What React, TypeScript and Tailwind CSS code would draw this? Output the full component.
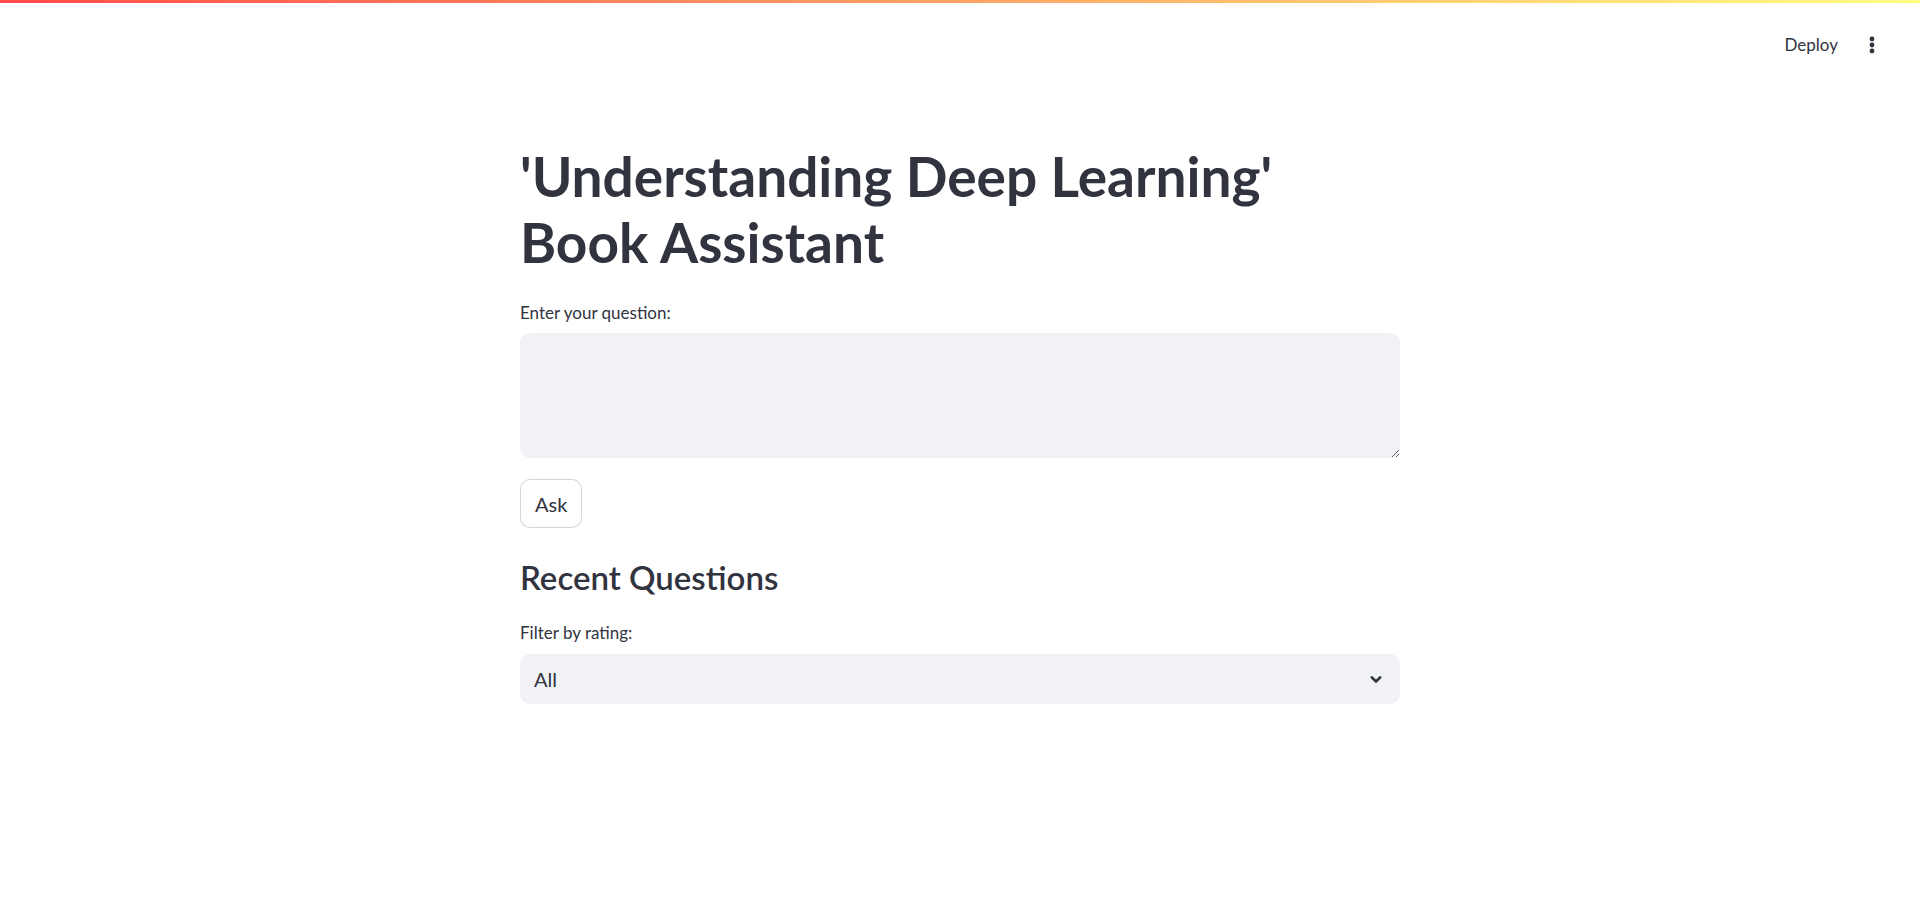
import React from "react";

export default function App() {
  const font = { fontFamily: "Lato, 'Noto Sans', sans-serif" };
  return (
    <div className="min-h-[922px] w-full bg-white text-[#31333f]" style={font}>
      <div className="h-[3px] w-full bg-[linear-gradient(90deg,#ff4b4b,#fffd80)]" />
      <div className="flex h-[84px] items-start justify-end pr-[38px] pt-[29px]">
        <div className="flex items-center gap-[24px]">
          <span className="text-[17px] leading-[26px] text-[#31333f]">Deploy</span>
          <svg width="20" height="20" viewBox="0 0 20 20" fill="#31333f">
            <circle cx="10" cy="4" r="2.4" />
            <circle cx="10" cy="10" r="2.4" />
            <circle cx="10" cy="16" r="2.4" />
          </svg>
        </div>
      </div>
      <main className="mx-auto flex w-[880px] flex-col">
        <h1 className="mt-[56px] text-[55px] font-bold leading-[66px]">
          'Understanding Deep Learning'
          <br />
          Book Assistant
        </h1>
        <label className="mt-[26px] text-[17px] leading-[24px]">Enter your question:</label>
        <textarea
          className="mt-[8px] h-[125px] w-full resize-y rounded-[10px] border-0 bg-[#f0f2f6] px-[15px] py-[12px] text-[20px] outline-none"
        />
        <div className="mt-[21px]">
          <button className="h-[49px] rounded-[10px] border border-[rgba(49,51,63,0.2)] bg-white px-[14px] text-[20px] leading-[24px]">
            Ask
          </button>
        </div>
        <h3 className="mt-[28px] text-[33px] font-semibold leading-[42px]">Recent Questions</h3>
        <label className="mt-[23px] text-[17px] leading-[24px]">Filter by rating:</label>
        <div className="mt-[9px] flex h-[50px] w-full items-center justify-between rounded-[10px] bg-[#f0f2f6] pl-[14px] pr-[14px]">
          <span className="text-[20px]">All</span>
          <svg width="20" height="20" viewBox="0 0 24 24" fill="none" stroke="#31333f" strokeWidth="3.2" strokeLinecap="round" strokeLinejoin="round">
            <path d="M7 10l5 5 5-5" />
          </svg>
        </div>
      </main>
    </div>
  );
}
